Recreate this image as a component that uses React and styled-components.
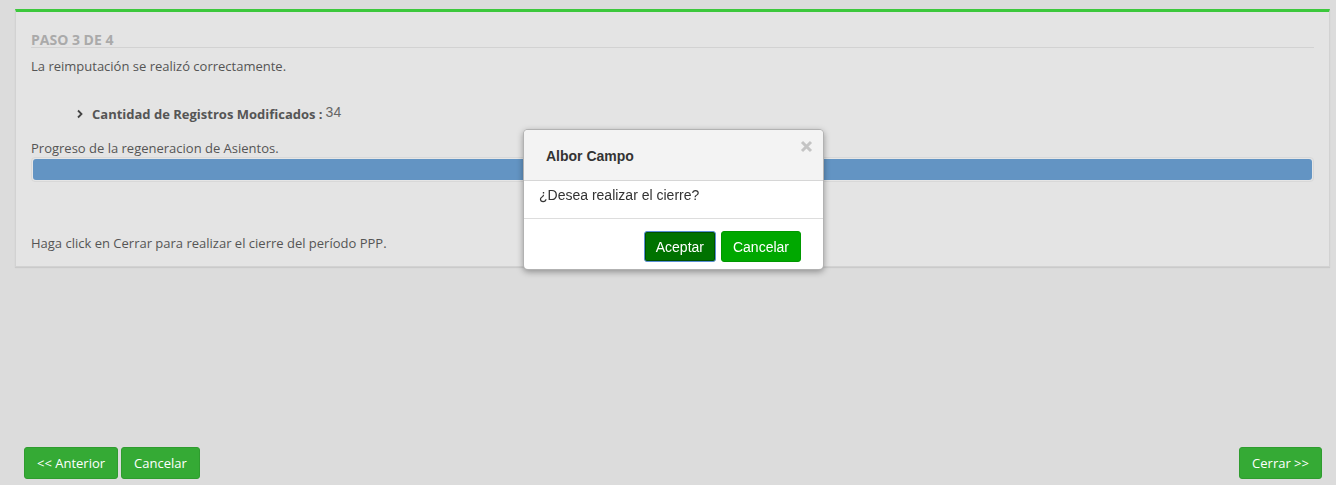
import React from 'react';
import styled, { createGlobalStyle } from 'styled-components';

const GlobalStyle = createGlobalStyle`
  html, body {
    margin: 0;
    padding: 0;
    background: #dcdcdc;
  }
  body {
    font-family: "Open Sans", "Liberation Sans", Arial, sans-serif;
    font-size: 13px;
    color: #555;
  }
`;

const Page = styled.div`
  min-height: 485px;
  box-sizing: border-box;
  display: flex;
  flex-direction: column;
  padding: 9px 6px 6px 15px;
`;

const Panel = styled.section`
  background: #e4e4e4;
  border: 1px solid #d2d2d2;
  border-top: 3px solid #3cc83c;
  padding: 20px 15px 14px 15px;
  box-shadow: 0 1px 1px rgba(0, 0, 0, 0.08);
`;

const StepTitle = styled.h4`
  margin: 0;
  font-size: 14px;
  font-weight: 700;
  color: #aaa;
  line-height: 15px;
  border-bottom: 1px solid #d2d2d2;
`;

const Line = styled.p`
  margin: ${p => p.$mt || 0}px 0 0 0;
  line-height: 18px;
  color: #555;
`;

const List = styled.ul`
  list-style: none;
  margin: 30px 0 0 0;
  padding: 0 0 0 45px;
`;

const Item = styled.li`
  display: flex;
  align-items: center;
  gap: 8px;
  height: 18px;
  line-height: 18px;
`;

const Label = styled.span`
  font-weight: 700;
  color: #555;
`;

const Count = styled.span`
  position: relative;
  top: -2px;
  margin-left: 3px;
  font-weight: 400;
  font-family: "Liberation Sans", Arial, sans-serif;
  font-size: 14px;
  color: #666;
`;

const Progress = styled.div`
  height: 25px;
  box-sizing: border-box;
  padding: 1px;
  border: 1px solid #d8d8d8;
  border-radius: 4px;
  background: #e6e6e6;
`;

const Bar = styled.div`
  height: 100%;
  background: #6394c3;
  border-radius: 3px;
`;

const Footer = styled.div`
  margin-top: auto;
  display: flex;
  align-items: center;
  padding-left: 9px;
  padding-right: 8px;
`;

const Group = styled.div`
  display: flex;
  gap: 3px;
`;

const Spacer = styled.div`
  flex: 1;
`;

const GreenButton = styled.button`
  font-family: "Open Sans", "Liberation Sans", sans-serif;
  font-size: 13px;
  color: #fff;
  background: #35aa35;
  border: 1px solid #2f9c2f;
  border-radius: 3px;
  height: 32px;
  padding: 0 12px;
  cursor: pointer;
`;

const Modal = styled.div`
  position: fixed;
  left: 523px;
  top: 129px;
  width: 299px;
  background: #fff;
  border: 1px solid rgba(0, 0, 0, 0.3);
  border-radius: 5px;
  box-shadow: 0 2px 6px rgba(0, 0, 0, 0.35);
  font-family: "Liberation Sans", Arial, sans-serif;
  overflow: hidden;
`;

const ModalHeader = styled.div`
  position: relative;
  background: #f3f3f3;
  height: 50px;
  border-bottom: 1px solid #d6d6d6;
  display: flex;
  align-items: center;
  padding-left: 22px;
`;

const ModalTitle = styled.h3`
  margin: 2px 0 0 0;
  font-size: 14px;
  font-weight: 700;
  color: #333;
`;

const Close = styled.span`
  position: absolute;
  right: 10px;
  top: 10px;
  display: flex;
  cursor: pointer;
`;

const ModalBody = styled.div`
  padding: 6px 15px 0 15px;
  height: 31px;
  font-size: 14px;
  color: #333;
  border-bottom: 1px solid #ddd;
`;

const ModalFooter = styled.div`
  display: flex;
  justify-content: flex-end;
  gap: 5px;
  padding: 12px 22px 7px 0;
`;

const ModalButton = styled.button`
  font-family: "Liberation Sans", Arial, sans-serif;
  font-size: 14px;
  color: #fff;
  height: 31px;
  padding: 0 11px;
  border-radius: 3px;
  background: ${p => (p.$primary ? '#007200' : '#00a800')};
  border: 1px solid ${p => (p.$primary ? '#5b8fd6' : '#009800')};
  box-shadow: ${p => (p.$primary ? 'inset 0 0 0 1px #004f00' : 'none')};
  cursor: pointer;
`;

const Chevron = () => (
  <svg width="8" height="10" viewBox="0 0 8 10">
    <path d="M2 1.5 L5.5 5 L2 8.5" fill="none" stroke="#444" strokeWidth="1.8" />
  </svg>
);

const CloseIcon = () => (
  <svg width="13" height="13" viewBox="0 0 13 13">
    <path d="M2 2 L11 11 M11 2 L2 11" stroke="#c4c4c4" strokeWidth="3" strokeLinecap="butt" />
  </svg>
);

export default function App() {
  return (
    <>
      <GlobalStyle />
      <Page>
        <Panel>
          <StepTitle>PASO 3 DE 4</StepTitle>
          <Line $mt={9}>La reimputación se realizó correctamente.</Line>
          <List>
            <Item>
              <Chevron />
              <span>
                <Label>Cantidad de Registros Modificados :</Label>
                <Count>34</Count>
              </span>
            </Item>
          </List>
          <Line $mt={16}>Progreso de la regeneracion de Asientos.</Line>
          <Progress>
            <Bar style={{ width: '100%' }} />
          </Progress>
          <Line $mt={52}>Haga click en Cerrar para realizar el cierre del período PPP.</Line>
        </Panel>
        <Footer>
          <Group>
            <GreenButton>&lt;&lt; Anterior</GreenButton>
            <GreenButton>Cancelar</GreenButton>
          </Group>
          <Spacer />
          <GreenButton>Cerrar &gt;&gt;</GreenButton>
        </Footer>
      </Page>
      <Modal role="dialog">
        <ModalHeader>
          <ModalTitle>Albor Campo</ModalTitle>
          <Close><CloseIcon /></Close>
        </ModalHeader>
        <ModalBody>¿Desea realizar el cierre?</ModalBody>
        <ModalFooter>
          <ModalButton $primary>Aceptar</ModalButton>
          <ModalButton>Cancelar</ModalButton>
        </ModalFooter>
      </Modal>
    </>
  );
}
